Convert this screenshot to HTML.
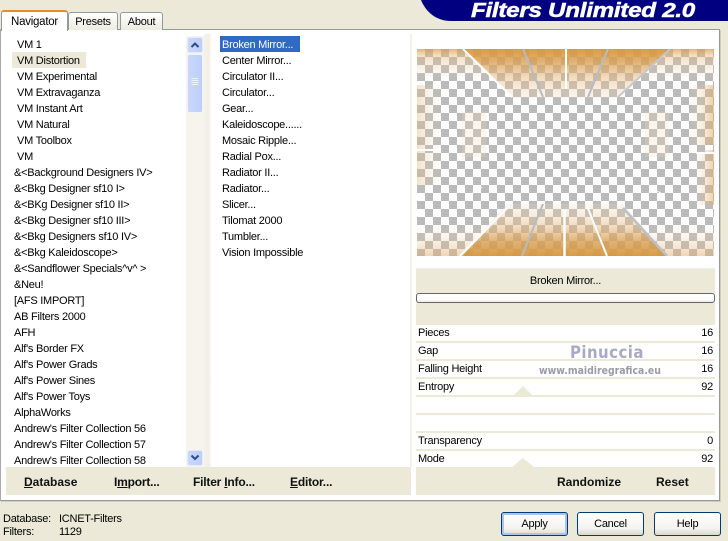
<!DOCTYPE html>
<html><head><meta charset="utf-8"><style>
html,body{margin:0;padding:0}
body{width:728px;height:538px;overflow:hidden;background:#ece9d8;position:relative;font:11px "Liberation Sans",sans-serif;letter-spacing:-.25px;color:#000}
.a{position:absolute;box-sizing:border-box}
.t{position:absolute;white-space:nowrap;line-height:16px;height:16px}
.l .t{margin-top:1px}
.b{position:absolute;white-space:nowrap;font-weight:bold;font-size:12px;letter-spacing:0;line-height:16px;color:#111}
.b.n{letter-spacing:-.2px}
.r{position:absolute;left:416px;width:299px;height:16px;background:#fff}
.r span{position:absolute;left:2px;top:0;line-height:16px}
.r i{position:absolute;right:2px;top:0;line-height:16px;font-style:normal}
.btn{position:absolute;top:512px;width:67px;height:24px;box-sizing:border-box;border:1px solid #003c74;border-radius:3px;background:linear-gradient(#fff,#f4f3ee 70%,#dcd8c8);text-align:center;line-height:22px;font-size:11px}
.tab{position:absolute;box-sizing:border-box;border:1px solid #919b9c;border-bottom:0;border-radius:3px 3px 0 0;background:linear-gradient(#fff,#ecebe0);text-align:center;font-size:11px}
</style></head><body>
<!-- banner -->
<svg class="a" style="left:0;top:0" width="728" height="30">
<path d="M421 0H728V21H451C436 21 426 12 421 0Z" fill="#000080"/>
<text x="471" y="17" font-family="Liberation Sans" font-weight="bold" font-style="italic" font-size="20" textLength="224" lengthAdjust="spacingAndGlyphs" fill="#fff" stroke="#fff" stroke-width=".5">Filters Unlimited 2.0</text>
</svg>
<!-- page -->
<div class="a" style="left:0;top:29px;width:720px;height:472px;background:#fff;border:1px solid #919b9c;border-left-color:#aaa;box-shadow:1px 1px 0 #d0cdbd"></div>
<div class="tab" style="left:68px;top:12px;width:50px;height:18px;line-height:18px">Presets</div>
<div class="tab" style="left:120px;top:12px;width:43px;height:18px;line-height:18px">About</div>
<div class="tab" style="left:1px;top:10px;width:67px;height:21px;line-height:18px;background:#fff;border-top:2px solid #e68b2c;z-index:2;border-bottom:0;font-size:11.5px;padding-top:1px">Navigator</div>
<!-- strips -->
<div class="a" style="left:204px;top:34px;width:8px;height:433px;background:linear-gradient(90deg,#f5f3ea,#f1efe4 60%,#fff)"></div>
<div class="a" style="left:410px;top:34px;width:2px;height:433px;background:#f4f2e8"></div>
<!-- list 1 -->
<div class="a" style="left:12px;top:52px;width:74px;height:16px;background:#ece9d8"></div>
<div class="l">
<div class="t" style="left:17px;top:36px">VM 1</div>
<div class="t" style="left:17px;top:52px">VM Distortion</div>
<div class="t" style="left:17px;top:68px">VM Experimental</div>
<div class="t" style="left:17px;top:84px">VM Extravaganza</div>
<div class="t" style="left:17px;top:100px">VM Instant Art</div>
<div class="t" style="left:17px;top:116px">VM Natural</div>
<div class="t" style="left:17px;top:132px">VM Toolbox</div>
<div class="t" style="left:17px;top:148px">VM</div>
<div class="t" style="left:14px;top:164px">&amp;&lt;Background Designers IV&gt;</div>
<div class="t" style="left:14px;top:180px">&amp;&lt;Bkg Designer sf10 I&gt;</div>
<div class="t" style="left:14px;top:196px">&amp;&lt;BKg Designer sf10 II&gt;</div>
<div class="t" style="left:14px;top:212px">&amp;&lt;Bkg Designer sf10 III&gt;</div>
<div class="t" style="left:14px;top:228px">&amp;&lt;Bkg Designers sf10 IV&gt;</div>
<div class="t" style="left:14px;top:244px">&amp;&lt;Bkg Kaleidoscope&gt;</div>
<div class="t" style="left:14px;top:260px">&amp;&lt;Sandflower Specials^v^ &gt;</div>
<div class="t" style="left:14px;top:276px">&amp;Neu!</div>
<div class="t" style="left:14px;top:292px">[AFS IMPORT]</div>
<div class="t" style="left:14px;top:308px">AB Filters 2000</div>
<div class="t" style="left:14px;top:324px">AFH</div>
<div class="t" style="left:14px;top:340px">Alf's Border FX</div>
<div class="t" style="left:14px;top:356px">Alf's Power Grads</div>
<div class="t" style="left:14px;top:372px">Alf's Power Sines</div>
<div class="t" style="left:14px;top:388px">Alf's Power Toys</div>
<div class="t" style="left:14px;top:404px">AlphaWorks</div>
<div class="t" style="left:14px;top:420px">Andrew's Filter Collection 56</div>
<div class="t" style="left:14px;top:436px">Andrew's Filter Collection 57</div>
<div class="t" style="left:14px;top:452px">Andrew's Filter Collection 58</div>
</div>
<!-- scrollbar -->
<svg class="a" style="left:186px;top:36px" width="18" height="431">
<defs><linearGradient id="sb" x1="0" x2="1" y1="0" y2="0"><stop offset="0" stop-color="#cad8fa"/><stop offset="1" stop-color="#bccefa"/></linearGradient></defs>
<rect x="0" y="0" width="18" height="431" fill="#f6f4ec"/>
<rect x="1.500" y="1.500" width="15" height="15" rx="2" fill="url(#sb)" stroke="#e4ebfc"/>
<path d="M5.500 11L9 7.500L12.500 11" fill="none" stroke="#2a4d8f" stroke-width="2"/>
<rect x="1.500" y="18.500" width="15" height="58" rx="2" fill="url(#sb)" stroke="#eef3fe"/>
<path d="M5.500 42.500H12.500M5.500 44.500H12.500M5.500 46.500H12.500M5.500 48.500H12.500" stroke="#eef3fe"/>
<rect x="1.500" y="414.500" width="15" height="15" rx="2" fill="url(#sb)" stroke="#e4ebfc"/>
<path d="M5.500 419.500L9 423L12.500 419.500" fill="none" stroke="#2a4d8f" stroke-width="2"/>
</svg>
<!-- list 2 -->
<div class="a" style="left:220px;top:36px;width:80px;height:16px;background:#316ac5"></div>
<div class="l">
<div class="t" style="left:222px;top:36px;color:#fff">Broken Mirror...</div>
<div class="t" style="left:222px;top:52px">Center Mirror...</div>
<div class="t" style="left:222px;top:68px">Circulator II...</div>
<div class="t" style="left:222px;top:84px">Circulator...</div>
<div class="t" style="left:222px;top:100px">Gear...</div>
<div class="t" style="left:222px;top:116px">Kaleidoscope......</div>
<div class="t" style="left:222px;top:132px">Mosaic Ripple...</div>
<div class="t" style="left:222px;top:148px">Radial Pox...</div>
<div class="t" style="left:222px;top:164px">Radiator II...</div>
<div class="t" style="left:222px;top:180px">Radiator...</div>
<div class="t" style="left:222px;top:196px">Slicer...</div>
<div class="t" style="left:222px;top:212px">Tilomat 2000</div>
<div class="t" style="left:222px;top:228px">Tumbler...</div>
<div class="t" style="left:222px;top:244px">Vision Impossible</div>
</div>
<!-- bottom bar -->
<div class="a" style="left:6px;top:467px;width:405px;height:28px;background:#ece9d8"></div>
<div class="b" style="left:24px;top:474px"><u>D</u>atabase</div>
<div class="b n" style="left:114px;top:474px">I<u>m</u>port...</div>
<div class="b n" style="left:193px;top:474px">Filter <u>I</u>nfo...</div>
<div class="b n" style="left:290px;top:474px"><u>E</u>ditor...</div>
<!-- right panel -->
<div class="a" style="left:416px;top:268px;width:299px;height:227px;background:#ece9d8"></div>
<svg class="a" style="left:417px;top:49px" width="297" height="207" viewBox="417 49 297 207">
<defs>
<pattern id="ck" x="417" y="49" width="16" height="16" patternUnits="userSpaceOnUse">
<rect x="0" y="0" width="16" height="16" fill="#fff"/>
<rect x="8" y="0" width="8" height="8" fill="#bbb"/><rect x="0" y="8" width="8" height="8" fill="#bbb"/>
</pattern>
<linearGradient id="top" gradientUnits="userSpaceOnUse" x1="0" x2="0" y1="49" y2="100"><stop offset="0" stop-color="#d6983f" stop-opacity=".95"/><stop offset=".25" stop-color="#d99f52" stop-opacity=".8"/><stop offset=".55" stop-color="#e4b67c" stop-opacity=".5"/><stop offset="1" stop-color="#f0d8b8" stop-opacity=".2"/></linearGradient>
<linearGradient id="bot" gradientUnits="userSpaceOnUse" x1="0" x2="0" y1="256" y2="204"><stop offset="0" stop-color="#d6983f" stop-opacity=".95"/><stop offset=".28" stop-color="#d99f52" stop-opacity=".8"/><stop offset=".55" stop-color="#e4b67c" stop-opacity=".5"/><stop offset="1" stop-color="#f0d8b8" stop-opacity=".2"/></linearGradient>
<linearGradient id="ct" gradientUnits="userSpaceOnUse" x1="0" x2="0" y1="49" y2="82"><stop offset="0" stop-color="#d89a48" stop-opacity=".75"/><stop offset=".2" stop-color="#e4b67c" stop-opacity=".45"/><stop offset="1" stop-color="#f0d8b8" stop-opacity="0"/></linearGradient>
<linearGradient id="cb" gradientUnits="userSpaceOnUse" x1="0" x2="0" y1="256" y2="225"><stop offset="0" stop-color="#e0ad6c" stop-opacity=".5"/><stop offset="1" stop-color="#f0d8b8" stop-opacity="0"/></linearGradient>
<linearGradient id="lf" x1="0" x2="1" y1="0" y2="0"><stop offset="0" stop-color="#e4b67c" stop-opacity=".4"/><stop offset="1" stop-color="#f0d8b8" stop-opacity="0"/></linearGradient>
<linearGradient id="rf" x1="1" x2="0" y1="0" y2="0"><stop offset="0" stop-color="#dfa862" stop-opacity=".55"/><stop offset="1" stop-color="#f0d8b8" stop-opacity="0"/></linearGradient>
</defs>
<rect x="417" y="49" width="297" height="207" fill="url(#ck)"/>
<!-- edge bands -->
<rect x="417" y="85" width="24" height="100" fill="url(#lf)"/>
<rect x="694" y="150" width="20" height="55" fill="url(#rf)"/>
<rect x="690" y="85" width="24" height="60" fill="url(#rf)"/>
<rect x="462" y="112" width="24" height="45" fill="#f0d8b8" opacity=".22"/>
<rect x="645" y="112" width="24" height="45" fill="#f0d8b8" opacity=".22"/>
<!-- top trapezoid -->
<polygon points="463,49 670,49 618,98 512,98" fill="url(#top)"/>
<polygon points="417,49 463,49 495,82 417,82" fill="url(#ct)"/>
<polygon points="670,49 714,49 714,82 636,82" fill="url(#ct)"/>
<!-- bottom trapezoid -->
<polygon points="460,256 667,256 623,204 507,204" fill="url(#bot)"/>
<polygon points="417,256 460,256 490,225 417,225" fill="url(#cb)"/>
<polygon points="667,256 714,256 714,225 640,225" fill="url(#cb)"/>
<!-- top rays -->
<path d="M463 49L512 97" stroke="#fff" stroke-width="2" fill="none"/>
<path d="M523 49L543 97" stroke="#b6bcc6" stroke-width="2" fill="none"/>
<path d="M566 49V89" stroke="#fff" stroke-width="2" fill="none"/>
<path d="M608 49L588 97" stroke="#b6bcc6" stroke-width="2" fill="none"/>
<path d="M670 49L618 97" stroke="#c4c8cc" stroke-width="2" fill="none"/>
<!-- bottom rays -->
<path d="M460 256L507 208" stroke="#fff" stroke-width="2.500" fill="none"/>
<path d="M522 256L543 204" stroke="#b6bcc6" stroke-width="2" fill="none"/>
<path d="M564.500 256V210" stroke="#fff" stroke-width="2.500" fill="none"/>
<path d="M607 256L587 206" stroke="#fff" stroke-width="2" fill="none"/>
<path d="M667 256L623 208" stroke="#bcc0c8" stroke-width="2.500" fill="none"/>
<!-- small -->
<rect x="417" y="149" width="17" height="2" fill="#fff"/>
<rect x="696" y="152" width="18" height="2" fill="#fff"/>
<path d="M470 195L482 187M649 187L661 193" stroke="#fff" stroke-width="1.200" opacity=".8"/>
</svg>
<div class="a" style="left:416px;top:268px;width:299px;height:1px;background:#f2f0e6"></div>
<div class="t" style="left:416px;top:273px;width:299px;text-align:center;font-size:11px">Broken Mirror...</div>
<div class="a" style="left:416px;top:293px;width:299px;height:10px;border:1px solid #666;border-radius:3px;background:linear-gradient(#fff,#fff 70%,#e8e8e8)"></div>
<div class="r" style="top:325px"><span>Pieces</span><i>16</i></div>
<div class="r" style="top:343px"><span>Gap</span><i>16</i></div>
<div class="r" style="top:361px"><span>Falling Height</span><i>16</i></div>
<div class="r" style="top:379px"><span>Entropy</span><i>92</i></div>
<div class="r" style="top:397px"></div>
<div class="r" style="top:415px"></div>
<div class="r" style="top:433px"><span>Transparency</span><i>0</i></div>
<div class="r" style="top:451px"><span>Mode</span><i>92</i></div>
<svg class="a" style="left:416px;top:320px" width="299" height="150">
<path d="M98 75L107 66L116 75Z" fill="#ece9d8"/>
<path d="M96 147L107 138L118 147Z" fill="#ece9d8"/>
</svg>
<div class="t" style="left:570px;top:344px;font:bold 17px/18px 'DejaVu Sans',sans-serif;letter-spacing:.5px;color:#a9a9c6;height:18px;transform-origin:0 0;transform:scaleX(.88)">Pinuccia</div>
<div class="t" style="left:539px;top:364px;font:bold 10.500px/14px 'DejaVu Sans',sans-serif;letter-spacing:0;color:#9a9aa8;height:14px;transform-origin:0 0;transform:scaleX(.89)">www.maidiregrafica.eu</div>
<div class="b" style="left:557px;top:474px">Randomize</div>
<div class="b" style="left:656px;top:474px">Reset</div>
<!-- status -->
<div class="t" style="left:3px;top:512px;line-height:14px">Database:</div>
<div class="t" style="left:59px;top:512px;line-height:14px">ICNET-Filters</div>
<div class="t" style="left:3px;top:525px;line-height:14px">Filters:</div>
<div class="t" style="left:59px;top:525px;line-height:14px">1129</div>
<!-- buttons -->
<div class="btn" style="left:501px;box-shadow:inset 0 0 0 2px #a9c4ee">Apply</div>
<div class="btn" style="left:577px">Cancel</div>
<div class="btn" style="left:654px">Help</div>
</body></html>
